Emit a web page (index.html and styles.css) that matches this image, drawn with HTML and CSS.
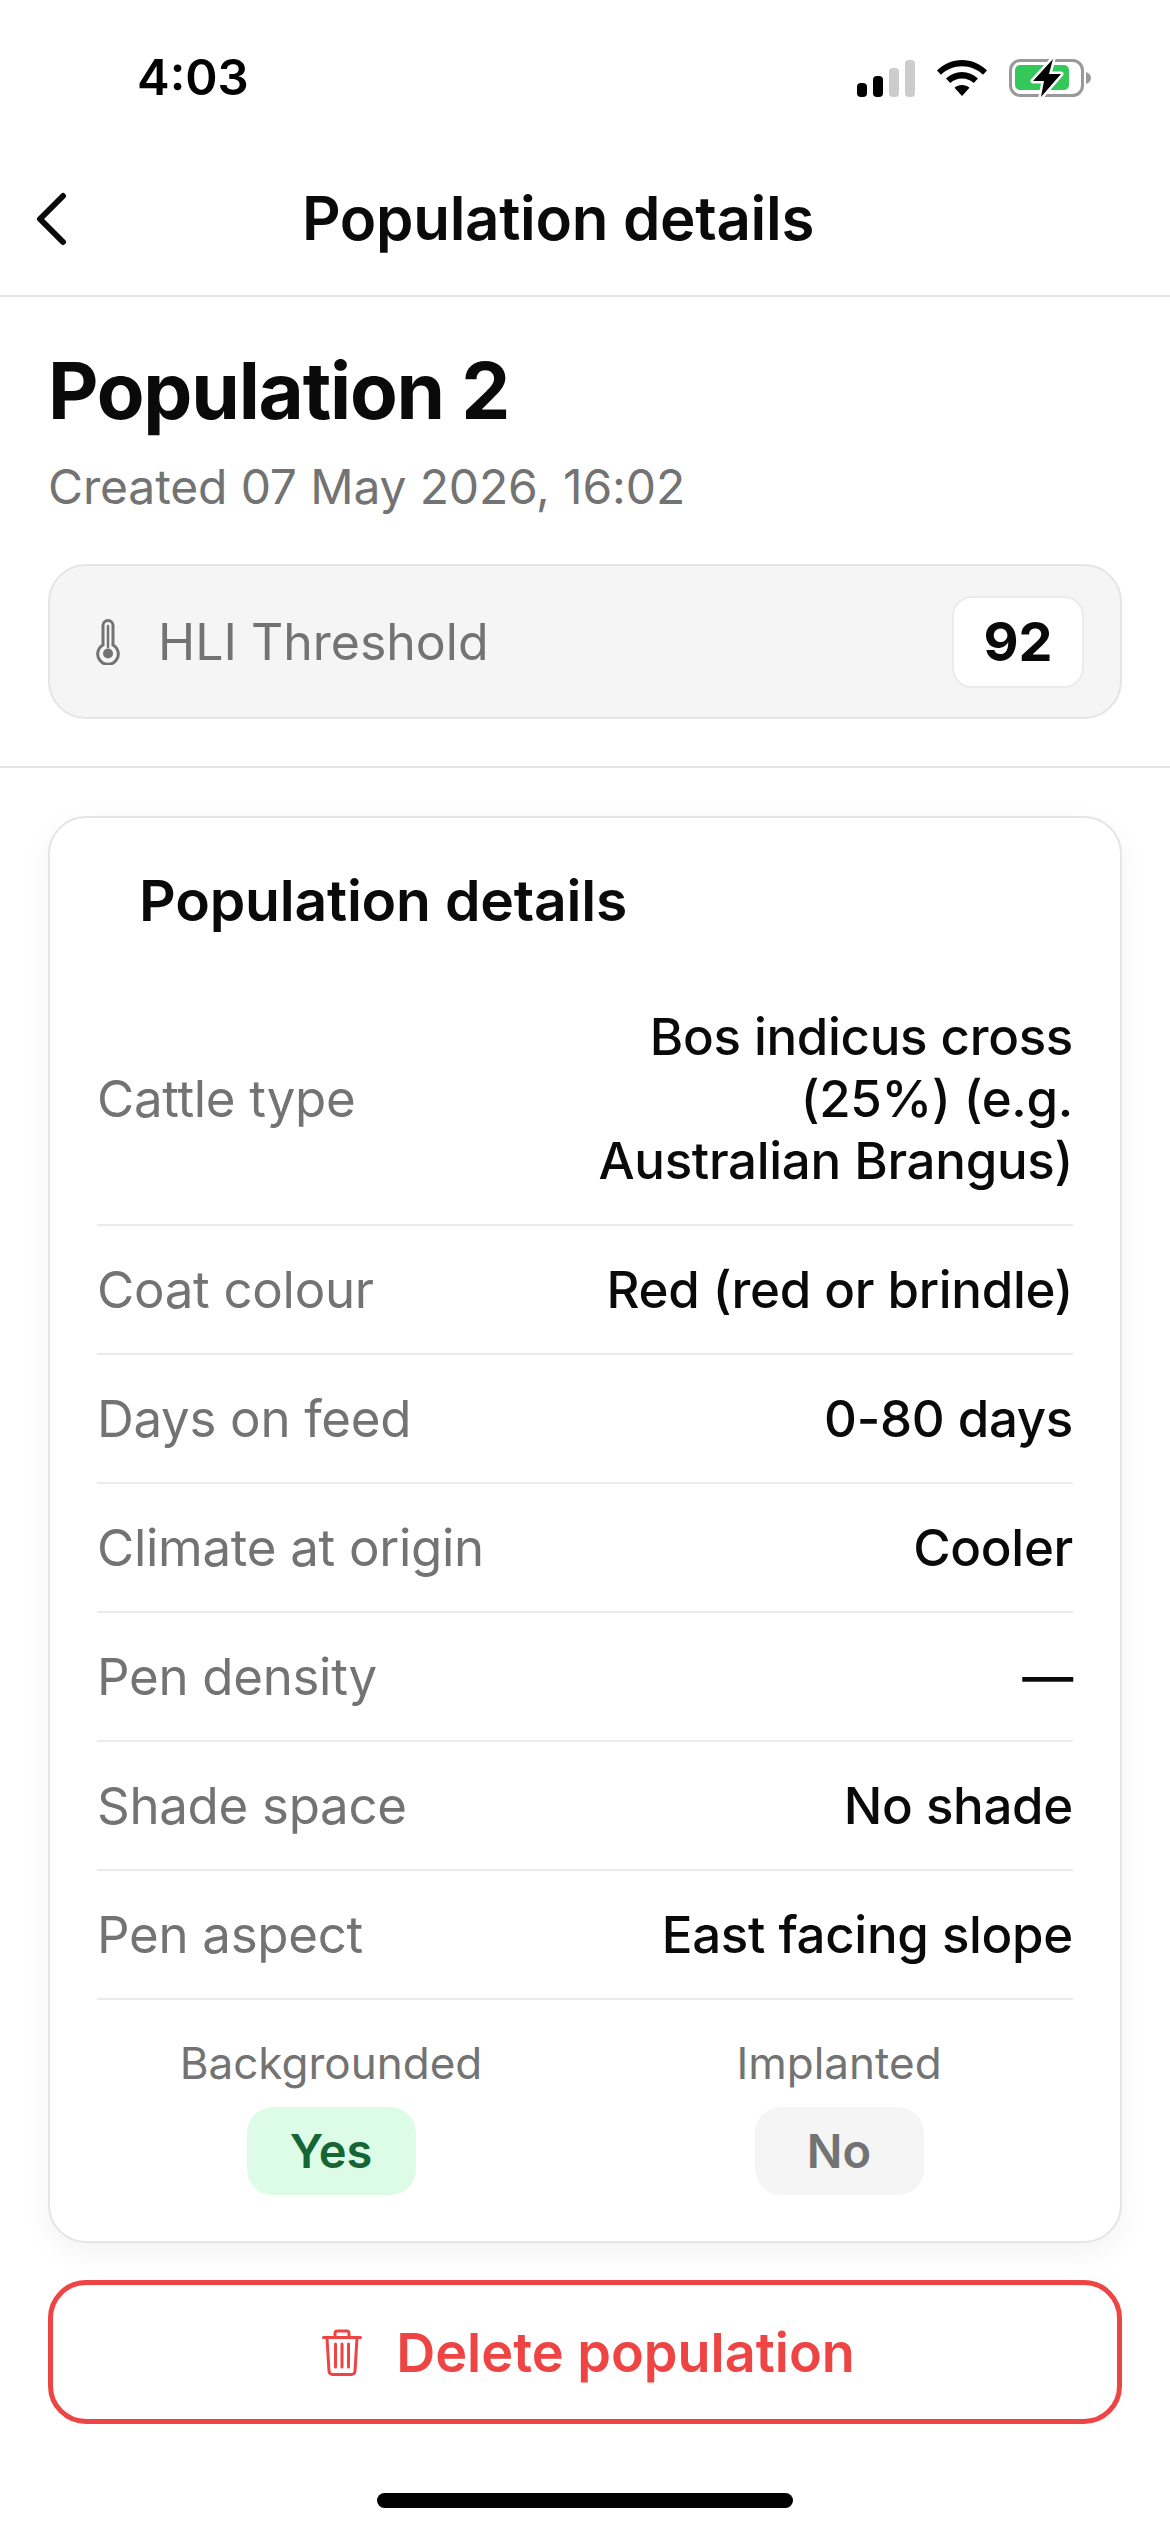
FILE: index.html
```html
<!doctype html>
<html lang="en">
<head>
    <meta charset="UTF-8">
    <title>Population details</title>
    <link rel="stylesheet" href="styles.css">
</head>
<body>
    <div class="status-bar">
        <div class="time">4:03</div>
        <div class="status-icons">
            <svg class="ic-signal" width="58" height="38" viewBox="0 0 58 38">
                <rect x="0" y="24" width="10" height="14" rx="4" fill="#000"/>
                <rect x="16" y="17" width="10" height="21" rx="4" fill="#000"/>
                <rect x="32" y="9" width="10" height="29" rx="4" fill="#ccc"/>
                <rect x="48" y="1" width="10" height="37" rx="4" fill="#ccc"/>
            </svg>
            <svg class="ic-wifi" width="50" height="36" viewBox="0 0 50 36">
                <path d="M25 0C15.500 0 7 3.700 0 10.500L4 14.800C9.700 9.300 17 6.300 25 6.300S40.300 9.300 46 14.800L50 10.500C43 3.700 34.500 0 25 0Z" fill="#000"/>
                <path d="M25 12C19 12 13.500 14.300 9 18.500L13.300 23C16.500 20 20.500 18.400 25 18.400S33.500 20 36.700 23L41 18.500C36.500 14.300 31 12 25 12Z" fill="#000"/>
                <path d="M25 25C22 25 19.700 26 17.500 27.800L25 36L32.500 27.800C30.300 26 28 25 25 25Z" fill="#000"/>
            </svg>
            <svg class="ic-battery" width="84" height="42" viewBox="0 0 84 42">
                <rect x="1.500" y="3.500" width="72" height="35" rx="10" fill="none" stroke="#999" stroke-width="3"/>
                <rect x="6" y="8" width="54" height="25" rx="5" fill="#34c759"/>
                <path d="M77 15C80 16 82 18 82 21S80 26 77 27Z" fill="#999"/>
                <path d="M44 2L24 24H35L32 40L52 17H40Z" fill="#000" stroke="#fff" stroke-width="5" paint-order="stroke" stroke-linejoin="round"/>
            </svg>
        </div>
    </div>

    <div class="nav-bar">
        <svg class="back" width="34" height="54" viewBox="0 0 34 54">
            <path d="M29 4L6 27L29 50" fill="none" stroke="#0a0a0a" stroke-width="6" stroke-linecap="round" stroke-linejoin="round"/>
        </svg>
        <div class="nav-title">Population details</div>
    </div>

    <div class="header">
        <h1>Population 2</h1>
        <div class="created">Created 07 May 2026, 16:02</div>
        <div class="threshold">
            <svg class="thermo" width="24" height="46" viewBox="0 0 24 46">
                <path d="M7 26V6.500a5 5 0 0 1 10 0V26a10.300 10.300 0 1 1-10 0Z" fill="none" stroke="#737373" stroke-width="3"/>
                <path d="M12 7V28" stroke="#737373" stroke-width="2.500" stroke-linecap="round"/>
                <circle cx="12" cy="34.500" r="5" fill="#737373"/>
            </svg>
            <span class="threshold-label">HLI Threshold</span>
            <span class="threshold-value">92</span>
        </div>
    </div>

    <div class="content">
        <div class="card">
            <h2>Population details</h2>
            <div class="row"><span class="row-label">Cattle type</span><span class="row-value row-value-wrap">Bos indicus cross (25%) (e.g. Australian Brangus)</span></div>
            <div class="row"><span class="row-label">Coat colour</span><span class="row-value">Red (red or brindle)</span></div>
            <div class="row"><span class="row-label">Days on feed</span><span class="row-value">0-80 days</span></div>
            <div class="row"><span class="row-label">Climate at origin</span><span class="row-value">Cooler</span></div>
            <div class="row"><span class="row-label">Pen density</span><span class="row-value">—</span></div>
            <div class="row"><span class="row-label">Shade space</span><span class="row-value">No shade</span></div>
            <div class="row"><span class="row-label">Pen aspect</span><span class="row-value">East facing slope</span></div>
            <div class="flags">
                <div class="flag">
                    <div class="flag-label">Backgrounded</div>
                    <div class="pill pill-yes">Yes</div>
                </div>
                <div class="flag">
                    <div class="flag-label">Implanted</div>
                    <div class="pill pill-no">No</div>
                </div>
            </div>
        </div>

        <div class="delete-btn">
            <svg class="trash" width="40" height="47" viewBox="0 0 40 47">
                <path d="M1.500 8.500H38.500M5 9L7 42a3.500 3.500 0 0 0 3.500 3.500H29.500a3.500 3.500 0 0 0 3.500-3.500L35 9M13 8V4.500A2.500 2.500 0 0 1 15.500 2H24.500A2.500 2.500 0 0 1 27 4.500V8M13.500 15V38M20 15V38M26.500 15V38" fill="none" stroke="#ef4444" stroke-width="3" stroke-linecap="round"/>
            </svg>
            <span>Delete population</span>
        </div>
    </div>

    <div class="home-bar"></div>
</body>
</html>
```

FILE: styles.css
```css
*{
    margin: 0;
    padding: 0;
    box-sizing: border-box;
}
body{
    width: 1170px;
    height: 2532px;
    background: #fff;
    color: #0a0a0a;
    font-family: Inter, "Liberation Sans", sans-serif;
    overflow: hidden;
}

/* status bar */
.status-bar{
    height: 132px;
    display: flex;
    justify-content: space-between;
    align-items: center;
    padding: 24px 77px 0 137px;
}
.time{
    font-size: 49px;
    font-weight: 600;
    color: #000;
    line-height: 60px;
}
.status-icons{
    display: flex;
    align-items: center;
    gap: 22px;
}

/* nav */
.nav-bar{
    height: 165px;
    display: flex;
    align-items: center;
    justify-content: center;
    position: relative;
    border-bottom: 2px solid #e5e5e5;
    padding: 9px 54px 0 0;
}
.back{
    position: absolute;
    left: 34px;
    top: 60px;
}
.nav-title{
    font-size: 60px;
    font-weight: 600;
    line-height: 70px;
    letter-spacing: -0.300px;
}

/* header */
.header{
    height: 471px;
    padding: 44px 48px 0;
    border-bottom: 2px solid #e5e5e5;
}
h1{
    font-size: 78px;
    font-weight: 700;
    line-height: 100px;
    letter-spacing: -1.200px;
}
.created{
    font-size: 48px;
    letter-spacing: -0.150px;
    color: #737373;
    line-height: 60px;
    margin-top: 16px;
}
.threshold{
    height: 155px;
    margin-top: 47px;
    display: flex;
    align-items: center;
    gap: 38px;
    padding: 0 36px 0 46px;
    background: #f5f5f5;
    border: 2px solid #e5e5e5;
    border-radius: 38px;
}
.threshold-label{
    flex: 1;
    font-size: 50px;
    color: #737373;
}
.threshold-value{
    width: 132px;
    height: 92px;
    background: #fff;
    border: 2px solid #ebebeb;
    border-radius: 20px;
    font-size: 54px;
    font-weight: 700;
    text-align: center;
    line-height: 88px;
}

/* card */
.content{
    padding: 48px 48px 0;
}
.card{
    height: 1427px;
    padding: 48px 47px 0;
    background: #fff;
    border: 2px solid #e5e5e5;
    border-radius: 38px;
    box-shadow: 0 10px 30px rgba(0, 0, 0, .05);
}
h2{
    font-size: 57px;
    font-weight: 600;
    line-height: 70px;
    letter-spacing: -0.200px;
    padding-left: 42px;
    margin-bottom: 37px;
}
.row{
    display: flex;
    justify-content: space-between;
    align-items: center;
    height: 129px;
    border-bottom: 2px solid #ebebeb;
}
.row:first-of-type{
    height: 253px;
}
.row-label{
    font-size: 51px;
    line-height: 62px;
    letter-spacing: -0.300px;
    color: #737373;
}
.row-value{
    font-size: 51px;
    line-height: 62px;
    letter-spacing: -0.300px;
    font-weight: 500;
    text-align: right;
    color: #0a0a0a;
}
.row-value-wrap{
    width: 500px;
}
.flags{
    display: grid;
    grid-template-columns: 1fr 1fr;
    gap: 40px;
    padding-top: 35px;
}
.flag{
    display: flex;
    flex-direction: column;
    align-items: center;
}
.flag-label{
    font-size: 44px;
    line-height: 56px;
    color: #737373;
}
.pill{
    width: 169px;
    height: 88px;
    margin-top: 16px;
    border-radius: 26px;
    font-size: 47px;
    font-weight: 600;
    line-height: 88px;
    text-align: center;
}
.pill-yes{
    background: #dcfce7;
    color: #166534;
}
.pill-no{
    background: #f5f5f5;
    color: #737373;
}

/* delete */
.delete-btn{
    height: 144px;
    margin-top: 37px;
    display: flex;
    align-items: center;
    justify-content: center;
    gap: 34px;
    padding-left: 7px;
    border: 5px solid #ef4444;
    border-radius: 38px;
    color: #ef4444;
    font-size: 54px;
    font-weight: 600;
}

.home-bar{
    position: absolute;
    left: 377px;
    top: 2493px;
    width: 416px;
    height: 15px;
    background: #000;
    border-radius: 8px;
}
```
